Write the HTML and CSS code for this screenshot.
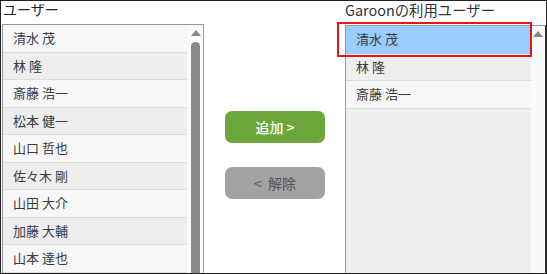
FILE: index.html
```html
<!DOCTYPE html>
<html lang="ja">
<head>
<meta charset="utf-8">
<link rel="stylesheet" href="styles.css">
</head>
<body>
<div class="frame">
  <div class="col col-left">
    <div class="label">ユーザー</div>
    <div class="listbox left-box">
      <div class="rows">
        <div class="row">清水 茂</div>
        <div class="row">林 隆</div>
        <div class="row">斎藤 浩一</div>
        <div class="row">松本 健一</div>
        <div class="row">山口 哲也</div>
        <div class="row">佐々木 剛</div>
        <div class="row">山田 大介</div>
        <div class="row">加藤 大輔</div>
        <div class="row">山本 達也</div>
      </div>
      <div class="scroll">
        <div class="arrow"></div>
        <div class="thumb"></div>
      </div>
    </div>
  </div>
  <div class="col col-mid">
    <button class="btn btn-add">追加&nbsp;&gt;</button>
    <button class="btn btn-remove">&lt;&nbsp;&nbsp;解除</button>
  </div>
  <div class="col col-right">
    <div class="label label-right">Garoonの利用ユーザー</div>
    <div class="listbox right-box">
      <div class="rows">
        <div class="row selected">清水 茂</div>
        <div class="row">林 隆</div>
        <div class="row">斎藤 浩一</div>
      </div>
      <div class="scroll">
        <div class="arrow"></div>
      </div>
    </div>
    <div class="highlight"></div>
  </div>
</div>
</body>
</html>
```

FILE: styles.css
```css
html, body {
  margin: 0;
  padding: 0;
  background: #fff;
}
.frame {
  width: 547px;
  height: 274px;
  box-sizing: border-box;
  border: 1px solid #222;
  overflow: hidden;
  display: flex;
  font-family: "Noto Sans CJK JP", "Noto Sans", sans-serif;
  color: #333;
  position: relative;
}
.col {
  display: flex;
  flex-direction: column;
}
.col-left {
  width: 203px;
  padding-left: 1px;
}
.label {
  height: 24px;
  font-size: 14px;
  line-height: 17px;
  padding-left: 1px;
  color: #222;
}
.label-right {
  padding-left: 0;
  color: #333;
  font-size: 14.4px;
}
.listbox {
  flex: 1;
  display: flex;
  border: 1px solid #999;
  border-bottom: none;
  background: #fafafa;
}
.left-box {
  width: 202px;
  box-sizing: border-box;
}
.rows {
  display: flex;
  flex-direction: column;
}
.left-box .rows {
  width: 184px;
}
.right-box .rows {
  width: 185px;
  background: #eee;
}
.row {
  height: 27.55px;
  box-sizing: border-box;
  border-bottom: 1px solid #dcdcdc;
  padding-left: 10px;
  font-size: 13px;
  line-height: 26px;
  background: #f7f7f7;
  color: #3a3a3a;
}
.row:nth-child(even) {
  background: #eee;
}
.row.selected {
  background: #99ccff;
  border-bottom-color: #99ccff;
}
.scroll {
  flex: 1;
  display: flex;
  flex-direction: column;
  align-items: center;
  padding-top: 5px;
}
.left-box .scroll {
  padding-left: 1px;
}
.arrow {
  width: 0;
  height: 0;
  border-left: 5px solid transparent;
  border-right: 5px solid transparent;
  border-bottom: 6px solid #888;
}
.thumb {
  margin-top: 6px;
  width: 9px;
  flex: 1;
  background: #888;
  border-radius: 5px 5px 0 0;
}
.col-mid {
  width: 140px;
  align-items: center;
  padding-top: 110px;
  gap: 24px;
}
.btn {
  width: 100px;
  height: 32px;
  border: none;
  border-radius: 7px;
  font-family: "Noto Sans CJK JP", "Noto Sans", sans-serif;
  font-size: 14px;
  padding: 0;
}
.btn-add {
  background: #6ca73c;
  color: #fff;
  font-weight: 500;
}
.btn-remove {
  background: #a2a2a2;
  color: #555;
}
.col-right {
  flex: 1;
  position: relative;
}
.right-box {
  border-right: 1px solid #333;
}
.highlight {
  position: absolute;
  left: -8px;
  top: 21px;
  width: 195px;
  height: 35px;
  box-sizing: border-box;
  border: 2px solid #e8141a;
}
```
